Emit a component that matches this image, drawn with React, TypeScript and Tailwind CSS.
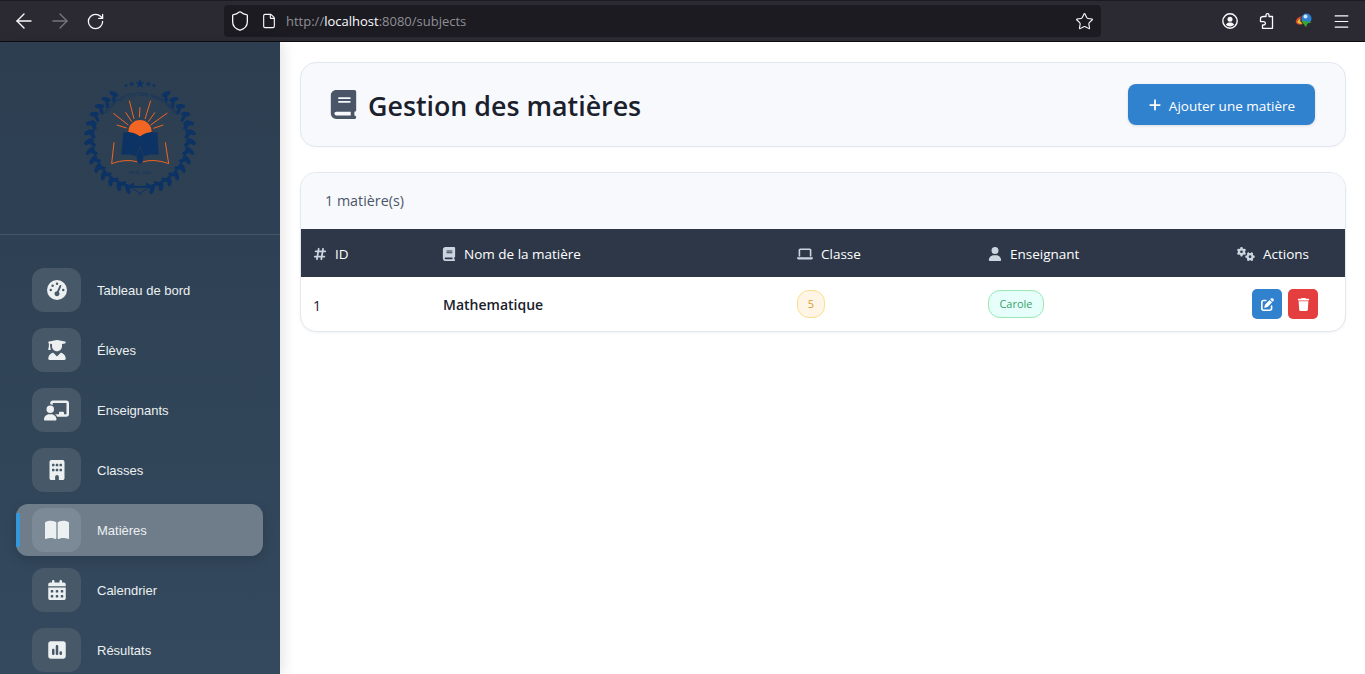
import {
  FaBook,
  FaBookOpen,
  FaBuilding,
  FaCalendarDays,
  FaChalkboardUser,
  FaGaugeHigh,
  FaGears,
  FaHashtag,
  FaLaptop,
  FaPenToSquare,
  FaPlus,
  FaSquarePollVertical,
  FaTrash,
  FaUser,
  FaUserGraduate,
} from 'react-icons/fa6'
import { ArrowLeft, ArrowRight, File, Menu, RotateCw, Shield, Star } from 'lucide-react'

const navItems = [
  { label: 'Tableau de bord', icon: FaGaugeHigh, size: 'text-[20px]' },
  { label: 'Élèves', icon: FaUserGraduate, size: 'text-[20px]' },
  { label: 'Enseignants', icon: FaChalkboardUser, size: 'text-[25px]' },
  { label: 'Classes', icon: FaBuilding, size: 'text-[20px]' },
  { label: 'Matières', icon: FaBookOpen, size: 'text-[24px]', active: true },
  { label: 'Calendrier', icon: FaCalendarDays, size: 'text-[20px]' },
  { label: 'Résultats', icon: FaSquarePollVertical, size: 'text-[20px]' },
]

function BrowserBar() {
  return (
    <div className="flex h-[42px] shrink-0 items-center border-y border-t-[#1c1b22] border-b-[#0c0c0f] bg-[#2b2a33] text-[#fbfbfe]">
      <div className="flex w-[224px] items-center pl-[12px]">
        <ArrowLeft size={24} strokeWidth={1.4} />
        <ArrowRight size={24} strokeWidth={1.4} className="ml-[12px] text-[#77767c]" />
        <RotateCw size={19} strokeWidth={1.6} className="ml-[14px]" />
      </div>
      <div className="flex h-[32px] w-[877px] items-center rounded-[4px] bg-[#1c1b22] pl-[5px] pr-[7px]">
        <Shield size={22} strokeWidth={1.4} />
        <File size={16} strokeWidth={1.7} className="ml-[10px]" />
        <span className="ml-[9px] pt-[2px] font-['Open_Sans',sans-serif] text-[13px] text-[#8f8f94]">
          http://<span className="text-[#fbfbfe]">localhost</span>:8080/subjects
        </span>
        <Star size={19} strokeWidth={1.4} className="ml-auto" />
      </div>
      <div className="flex flex-1 items-center pl-[121px]">
        <svg width="16" height="16" viewBox="0 0 16 16">
          <circle cx="8" cy="8" r="7.2" fill="none" stroke="#fbfbfe" strokeWidth="1.4" />
          <circle cx="8" cy="6.2" r="2.5" fill="#fbfbfe" />
          <path d="M3.8 11.6c1-1.6 2.4-2.2 4.2-2.2s3.2.6 4.2 2.2c-1.1 1.2-2.6 1.9-4.2 1.9s-3.1-.7-4.2-1.9z" fill="#fbfbfe" />
        </svg>
        <svg width="15" height="16" viewBox="0 0 15 16" className="ml-[21px]" fill="none" stroke="#fbfbfe" strokeWidth="1.3" strokeLinejoin="round">
          <path d="M5 3.5h2V2.2a1.5 1.5 0 0 1 3 0v1.3h3.500v11.800H3.500v-3.300h1.200a1.600 1.600 0 0 0 0-3.400H1.500V5.500C1.500 4.400 2.800 3.500 5 3.500z" />
        </svg>
        <svg width="18" height="16" viewBox="0 0 18 16" className="ml-[21px]">
          <circle cx="11.500" cy="5.500" r="5" fill="#2f7fd6" />
          <circle cx="10.500" cy="3.500" r="2" fill="#c9e8f8" />
          <path d="M.6 8.500C1.500 5 4 3.500 7 3.500 5.500 5 5 6 5 7.500l3 3.500C5 12.500 1.500 12 .6 8.500z" fill="#d9482b" />
          <path d="M2.200 9c1-2 2.300-3 3.500-3.200L5 8l2 2.700C5 11 3 10.500 2.200 9z" fill="#e8c23a" />
          <path d="M6 7.500l11 1.500-4.500 1.500-1.500 3.800z" fill="#35a832" />
        </svg>
        <Menu size={19} strokeWidth={1.5} className="ml-[19px]" />
      </div>
    </div>
  )
}

// coords in the viewBox are the 3x zoom of the logo, easier to trace
function Logo() {
  const navy = '#0c3364'
  const angles = Array.from({ length: 14 }, (_, i) => 30 + i * 10.500)
  const rays = [
    [238, 175, 240, 145],
    [222, 180, 208, 125],
    [255, 180, 272, 125],
    [215, 188, 197, 160],
    [265, 188, 285, 160],
    [205, 198, 160, 163],
    [272, 198, 322, 162],
    [200, 207, 170, 198],
    [280, 208, 310, 198],
  ]
  return (
    <svg width="116" height="116" viewBox="66 63 348 348">
      <g fill={navy}>
        {angles.flatMap((a) => [
          <ellipse key={`l${a}`} cx="240" cy="84" rx="6.500" ry="14" transform={`rotate(${-a} 240 240) rotate(-35 240 84)`} />,
          <ellipse key={`m${a}`} cx="240" cy="97" rx="5" ry="11" transform={`rotate(${-a - 3} 240 240) rotate(35 240 97)`} />,
          <ellipse key={`r${a}`} cx="240" cy="84" rx="6.500" ry="14" transform={`rotate(${a} 240 240) rotate(35 240 84)`} />,
          <ellipse key={`s${a}`} cx="240" cy="97" rx="5" ry="11" transform={`rotate(${a + 3} 240 240) rotate(-35 240 97)`} />,
        ])}
        <polygon points="240,60 244,70 254,70 246,76 249,86 240,80 231,86 234,76 226,70 236,70" />
        <polygon points="215,68 218,73 223,73 219,77 220,82 215,79 210,82 211,77 207,73 212,73" />
        <polygon points="265,68 268,73 273,73 269,77 270,82 265,79 260,82 261,77 257,73 262,73" />
        <polygon points="198,73 200,77 204,77 201,80 202,84 198,82 194,84 195,80 192,77 196,77" />
        <polygon points="282,73 284,77 288,77 285,80 286,84 282,82 278,84 279,80 276,77 280,77" />
      </g>
      <path id="logo-arc" d="M130 183A120 120 0 0 1 350 183" fill="none" />
      <text fontSize="15.500" fill={navy} fontFamily="Liberation Sans, sans-serif">
        <textPath href="#logo-arc" startOffset="50%" textAnchor="middle">YOUR INSTITUTION NAME HERE</textPath>
      </text>
      <path d="M108 190A142 142 0 1 0 372 190" fill="none" stroke={navy} strokeWidth="6" />
      <path d="M205 218a35 35 0 0 1 70 0l-35 14z" fill="#f26522" />
      <g stroke="#f26522" strokeWidth="3" fill="none">
        {rays.map(([x1, y1, x2, y2]) => (
          <line key={`${x1}-${y1}`} x1={x1} y1={y1} x2={x2} y2={y2} />
        ))}
        <path d="M162 250L155 314C185 302 220 302 240 312C260 302 295 302 326 314L316 250" />
      </g>
      <path d="M190 220C210 218 230 222 240 233C250 222 270 218 292 220L296 288C275 284 255 287 240 298C225 287 205 284 184 288z" fill={navy} />
      <path d="M240 262L252 292L246 314H234L228 292z" fill={navy} stroke="#2e4053" strokeWidth="2" />
      <text x="240" y="346" textAnchor="middle" fontSize="12" fill={navy} fontFamily="Liberation Sans, sans-serif">ESTD. 2000</text>
      <path d="M180 378C205 380 225 390 245 408M300 378C275 380 255 390 235 408" fill="none" stroke={navy} strokeWidth="3" />
    </svg>
  )
}

function Sidebar() {
  return (
    <aside className="relative z-10 flex w-[280px] shrink-0 flex-col overflow-hidden bg-gradient-to-b from-[#2c3e50] to-[#34495e] shadow-[4px_0_12px_rgba(0,0,0,0.1)]">
      <div className="flex h-[193px] shrink-0 items-center justify-center border-b border-white/10">
        <Logo />
      </div>
      <nav className="flex flex-col gap-2 px-4 pt-[29px]">
        {navItems.map((item) => {
          const Icon = item.icon
          return (
            <a
              key={item.label}
              className={
                item.active
                  ? 'relative flex h-[52px] w-[247px] shrink-0 items-center gap-4 overflow-hidden rounded-xl bg-[#6f7d8b] px-4 font-["Liberation_Sans",sans-serif] text-[13px] text-[#ecf0f1] shadow-[0_4px_12px_rgba(0,0,0,0.15)]'
                  : 'relative flex h-[52px] w-[247px] shrink-0 items-center gap-4 rounded-xl px-4 font-["Liberation_Sans",sans-serif] text-[13px] text-[#ecf0f1]'
              }
            >
              {item.active && <span className="absolute left-0 top-[9px] h-[34px] w-1 bg-[#3498db]" />}
              <span
                className={
                  item.active
                    ? `flex h-[44px] w-[49px] items-center justify-center rounded-xl bg-[#7c8996] ${item.size}`
                    : `flex h-[44px] w-[49px] items-center justify-center rounded-xl bg-[#475868] ${item.size}`
                }
              >
                <Icon />
              </span>
              <span className="pt-[2px]">{item.label}</span>
            </a>
          )
        })}
      </nav>
    </aside>
  )
}

function HeadCell({ icon: Icon, label, iconSize, className }: { icon: typeof FaBook; label: string; iconSize: string; className?: string }) {
  return (
    <th className={`px-3 text-left align-middle font-normal ${className ?? ''}`}>
      <span className="flex items-center gap-2 pt-[2px]">
        <Icon className={`${iconSize} text-[#cbd5e0]`} /> {label}
      </span>
    </th>
  )
}

function SubjectsTable() {
  return (
    <table className="w-full table-fixed border-collapse text-[13.5px]">
      <thead>
        <tr className="h-[48px] bg-[#2d3748] text-white">
          <HeadCell icon={FaHashtag} iconSize="text-[14px]" label="ID" className="w-[129px]" />
          <HeadCell icon={FaBook} iconSize="text-[14px]" label="Nom de la matière" className="w-[355px]" />
          <HeadCell icon={FaLaptop} iconSize="text-[16px]" label="Classe" className="w-[191px]" />
          <HeadCell icon={FaUser} iconSize="text-[14px]" label="Enseignant" />
          <HeadCell icon={FaGears} iconSize="text-[18px]" label="Actions" className="w-[120px]" />
        </tr>
      </thead>
      <tbody>
        <tr className="h-[54px] text-[#1a202c]">
          <td className="px-3 pt-[2px] text-[14px]">1</td>
          <td className="px-3 pl-[13px] text-[14px] font-semibold">Mathematique</td>
          <td className="px-3">
            <span className="inline-flex h-[28px] w-[28px] items-center justify-center rounded-[12px] border border-[#fbe08a] bg-[#fff5e6] text-[11px] text-[#d69e2e]">
              5
            </span>
          </td>
          <td className="px-3">
            <span className="inline-flex h-[28px] w-[56px] items-center justify-center rounded-[12px] border border-[#9ae6b4] bg-[#e6fffa] text-[11px] text-[#38a169]">
              Carole
            </span>
          </td>
          <td className="px-3">
            <div className="flex justify-end gap-[6px] pr-[15px]">
              <button className="flex h-[30px] w-[30px] items-center justify-center rounded-[5px] bg-[#3182ce] text-[13px] text-white">
                <FaPenToSquare />
              </button>
              <button className="flex h-[30px] w-[30px] items-center justify-center rounded-[5px] bg-[#e53e3e] text-[13px] text-white">
                <FaTrash />
              </button>
            </div>
          </td>
        </tr>
      </tbody>
    </table>
  )
}

export default function App() {
  return (
    <div className="flex h-[674px] flex-col overflow-hidden bg-white font-['Open_Sans',sans-serif]">
      <BrowserBar />
      <div className="flex min-h-0 flex-1">
        <Sidebar />
        <main className="flex-1 pl-5 pr-[19px] pt-5">
          <section className="flex h-[85px] items-center justify-between rounded-2xl border border-[#e2e8f0] bg-[#f8f9fc] pl-[28px] pr-[30px] shadow-[0_1px_3px_rgba(0,0,0,0.03)]">
            <h1 className="flex items-center gap-[10px] text-[26.8px] font-semibold text-[#1a202c]">
              <FaBook className="text-[29px] text-[#4a5568]" />
              <span className="pt-[3px]">Gestion des matières</span>
            </h1>
            <button className="flex h-[41px] w-[187px] items-center justify-center gap-[7px] rounded-lg bg-[#3182ce] text-[13.5px] font-medium text-white shadow-[0_1px_3px_rgba(0,0,0,0.12)]">
              <FaPlus className="text-[14px]" />
              <span className="pt-[3px]">Ajouter une matière</span>
            </button>
          </section>
          <section className="mt-[25px] overflow-hidden rounded-2xl border border-[#e2e8f0] bg-white shadow-[0_1px_3px_rgba(0,0,0,0.05)]">
            <div className="flex h-[56px] items-center bg-[#f8f9fc] pl-[24px] text-[14.3px] text-[#4a5568]">1 matière(s)</div>
            <SubjectsTable />
          </section>
        </main>
      </div>
    </div>
  )
}
